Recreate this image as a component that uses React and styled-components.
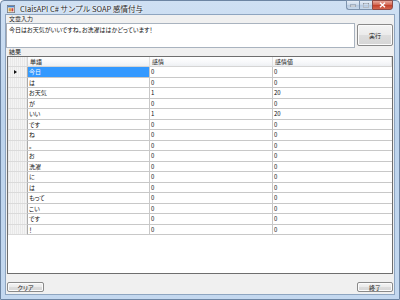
import React from "react";
import styled, { createGlobalStyle } from "styled-components";

const GlobalStyle = createGlobalStyle`
  html, body {
    margin: 0;
    padding: 0;
    width: 400px;
    height: 300px;
    overflow: hidden;
    background: #ffffff;
  }
  body {
    font-family: "Noto Sans CJK JP", "Noto Sans", sans-serif;
    font-feature-settings: "palt";
  }
`;

const rows = [
  ["今日", "0", "0"],
  ["は", "0", "0"],
  ["お天気", "1", "20"],
  ["が", "0", "0"],
  ["いい", "1", "20"],
  ["です", "0", "0"],
  ["ね", "0", "0"],
  ["。", "0", "0"],
  ["お", "0", "0"],
  ["洗濯", "0", "0"],
  ["に", "0", "0"],
  ["は", "0", "0"],
  ["もって", "0", "0"],
  ["こい", "0", "0"],
  ["です", "0", "0"],
  ["！", "0", "0"],
];

const App = () => {
  return (
    <>
      <GlobalStyle />
      <Window>
        <TitleBar>
          <TitleIcon viewBox="0 0 10 10">
            <rect x="0.5" y="0.5" width="9" height="9" fill="#f4f4f4" stroke="#7a7a7a" />
            <rect x="1" y="1" width="8" height="2" fill="#4a7fc1" />
            <rect x="2" y="4" width="3" height="4" fill="#d9a43a" />
            <rect x="5.5" y="4" width="2.5" height="4" fill="#c9463d" />
          </TitleIcon>
          <TitleText>ClaisAPI C# サンプル SOAP 感情付与</TitleText>
          <CaptionButtons>
            <CaptionButton>
              <svg width="6" height="4" viewBox="0 0 6 4">
                <rect x="0" y="2" width="6" height="2" fill="#ffffff" stroke="#44556b" strokeWidth="0.6" />
              </svg>
            </CaptionButton>
            <CaptionButton>
              <svg width="6" height="5" viewBox="0 0 6 5">
                <rect x="0.5" y="0.5" width="5" height="4" fill="none" stroke="#ffffff" strokeWidth="1" />
                <rect x="0.2" y="0.2" width="5.6" height="4.6" fill="none" stroke="#44556b" strokeWidth="0.4" />
              </svg>
            </CaptionButton>
            <CloseButton>
              <svg width="7" height="6" viewBox="0 0 7 6">
                <path d="M1 0.8 L6 5.2 M6 0.8 L1 5.2" stroke="#ffffff" strokeWidth="1.4" />
              </svg>
            </CloseButton>
          </CaptionButtons>
        </TitleBar>
        <Client>
          <FieldLabel>文章入力</FieldLabel>
          <InputRow>
            <TextBox>今日はお天気がいいですね。お洗濯ははかどっています！</TextBox>
            <Button $w={36} $h={22}>実行</Button>
          </InputRow>
          <FieldLabel>結果</FieldLabel>
          <GridView>
            <GridRow $header>
              <RowHeader $header />
              <HeaderCell>単語</HeaderCell>
              <HeaderCell>感情</HeaderCell>
              <HeaderCell>感情値</HeaderCell>
            </GridRow>
            {rows.map((r, i) => (
              <GridRow key={i}>
                <RowHeader>{i === 0 && <Arrow />}</RowHeader>
                <Cell $selected={i === 0}>{r[0]}</Cell>
                <Cell>{r[1]}</Cell>
                <Cell>{r[2]}</Cell>
              </GridRow>
            ))}
          </GridView>
          <BottomBar>
            <Button $w={37} $h={10}>クリア</Button>
            <Button $w={36} $h={10}>終了</Button>
          </BottomBar>
        </Client>
      </Window>
    </>
  );
};

export default App;

const Window = styled.div`
  width: 400px;
  height: 300px;
  box-sizing: border-box;
  display: flex;
  flex-direction: column;
  background: linear-gradient(180deg, #cfe0f3 0%, #bcd3ec 40%, #c4d8ef 100%);
  border: 1px solid #6d85a3;
  border-radius: 4px 4px 0 0;
  padding: 0 4px 4px 4px;
`;

const TitleBar = styled.div`
  height: 13px;
  display: flex;
  align-items: flex-start;
  position: relative;
`;

const TitleIcon = styled.svg`
  width: 8px;
  height: 8px;
  margin: 4px 0 0 2px;
  flex: none;
`;

const TitleText = styled.div`
  font-size: 7.5px;
  line-height: 8px;
  margin: 4px 0 0 5px;
  color: #1e1e1e;
  white-space: nowrap;
  font-feature-settings: normal;
  text-shadow: 0 0 3px #ffffff, 0 0 2px #ffffff;
`;

const CaptionButtons = styled.div`
  margin-left: auto;
  margin-right: 2px;
  display: flex;
  margin-top: -1px;
`;

const CaptionButton = styled.div`
  width: 13px;
  height: 10px;
  box-sizing: border-box;
  display: flex;
  align-items: center;
  justify-content: center;
  border: 1px solid #7d93ae;
  border-right: none;
  background: linear-gradient(180deg, #e6eef8 0%, #c9d8ea 50%, #b6c9e0 51%, #c8d9ec 100%);
  &:first-child {
    border-radius: 0 0 0 3px;
  }
`;

const CloseButton = styled(CaptionButton)`
  width: 21px;
  border-right: 1px solid #7d4a48;
  border-color: #8e4a45;
  border-radius: 0 0 3px 0;
  background: linear-gradient(180deg, #e9a99c 0%, #d46a56 45%, #c2402b 52%, #d5664f 100%);
`;

const Client = styled.div`
  flex: 1;
  display: flex;
  flex-direction: column;
  background: #f0f0f0;
  border: 1px solid #8ea5c0;
  padding: 0 1px 2px 0;
  min-height: 0;
`;

const FieldLabel = styled.div`
  font-size: 6px;
  line-height: 8px;
  height: 8px;
  padding-left: 3px;
  color: #1a1a1a;
`;

const InputRow = styled.div`
  display: flex;
  gap: 2px;
  align-items: flex-start;
`;

const TextBox = styled.div`
  width: 350px;
  height: 25px;
  box-sizing: border-box;
  background: #ffffff;
  border: 1px solid #a9b3bf;
  border-left-color: #abadb3;
  font-size: 6px;
  line-height: 8px;
  padding: 2px 2px;
  color: #111111;
  white-space: nowrap;
`;

const Button = styled.div`
  width: ${(p) => p.$w}px;
  height: ${(p) => p.$h}px;
  margin-top: 1px;
  box-sizing: border-box;
  display: flex;
  align-items: center;
  justify-content: center;
  font-size: 6px;
  color: #1a1a1a;
  border: 1px solid #8a8a8a;
  border-radius: 2px;
  background: linear-gradient(180deg, #f4f4f4 0%, #ebebeb 48%, #dddddd 52%, #d6d6d6 100%);
  box-shadow: inset 0 0 0 1px #fbfbfb;
`;

const GridView = styled.div`
  margin: 0 0 0 1px;
  height: 218px;
  box-sizing: border-box;
  border: 1px solid #6e6e6e;
  background: #ffffff;
  display: flex;
  flex-direction: column;
  overflow: hidden;
`;

const GridRow = styled.div`
  display: grid;
  grid-template-columns: 20px 122px 123px 1fr;
  height: ${(p) => (p.$header ? "10px" : "10.5px")};
  flex: none;
  font-size: 6px;
`;

const RowHeader = styled.div`
  position: relative;
  background: repeating-linear-gradient(90deg, #e9e9e9 0 1px, #f4f4f4 1px 2px);
  border-right: 1px solid ${(p) => (p.$header ? "#d5d5d5" : "#a9a9a9")};
  border-bottom: 1px solid #dadada;
  box-sizing: border-box;
`;

const Arrow = styled.span`
  position: absolute;
  left: 6px;
  top: 3px;
  width: 0;
  height: 0;
  border-top: 2.5px solid transparent;
  border-bottom: 2.5px solid transparent;
  border-left: 3px solid #111111;
`;

const HeaderCell = styled.div`
  box-sizing: border-box;
  background: linear-gradient(180deg, #ffffff 0%, #f7f8fa 60%, #eef0f3 100%);
  border-right: 1px solid #e0e0e0;
  border-bottom: 1px solid #d5d5d5;
  padding-left: 2px;
  line-height: 9px;
  color: #222222;
`;

const Cell = styled.div`
  box-sizing: border-box;
  background: ${(p) => (p.$selected ? "#3399ff" : "#ffffff")};
  color: ${(p) => (p.$selected ? "#ffffff" : "#111111")};
  border-right: 1px solid #c8c8c8;
  border-bottom: 1px solid #c8c8c8;
  padding-left: 1px;
  line-height: 9.5px;
  white-space: nowrap;
  overflow: hidden;
  &:last-child {
    border-right: none;
  }
`;

const BottomBar = styled.div`
  margin-top: auto;
  display: flex;
  justify-content: space-between;
  padding: 0 0 0 1px;
`;
